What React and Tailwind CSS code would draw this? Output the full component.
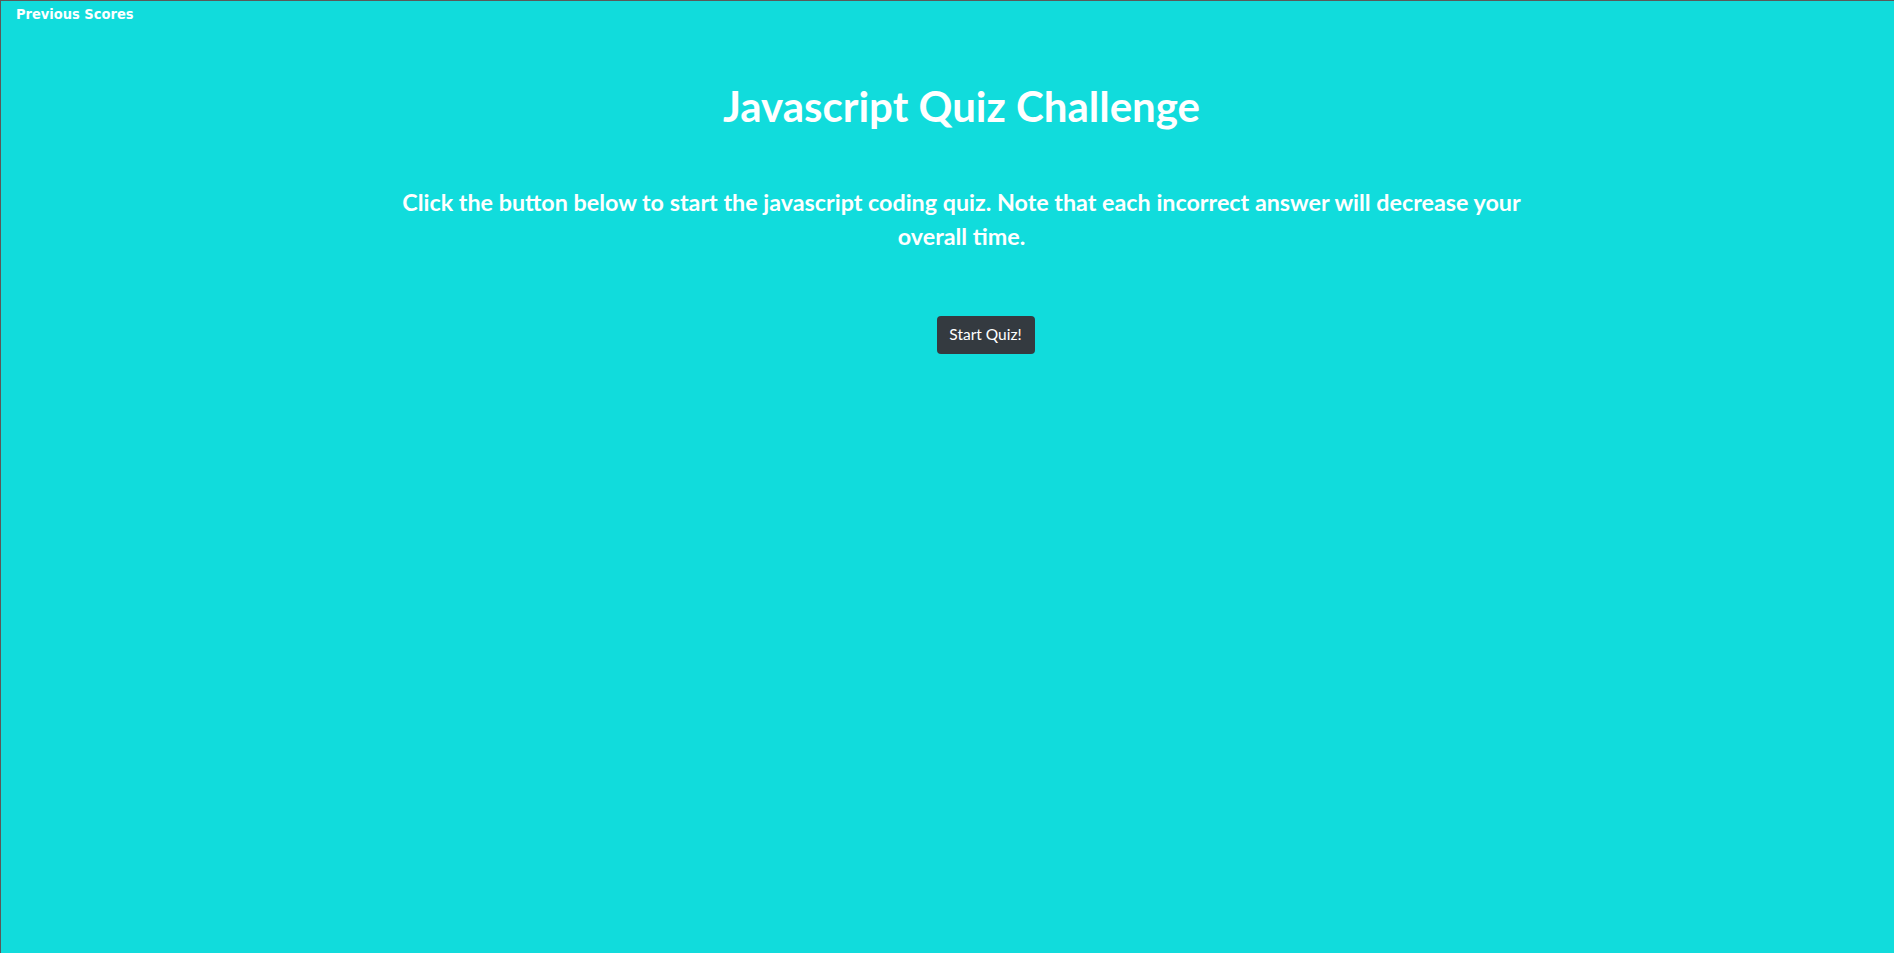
import React from 'react';

export default function App() {
  return (
    <div className="min-h-screen w-full bg-[#11dcdc] border-t border-l border-[#5a5a5a] text-white">
      {/* Top bar */}
      <div className="px-[15px] pt-[4px] leading-[16px]">
        <a className="text-[14.5px] font-bold leading-[16px] font-['DejaVu_Sans_Condensed','DejaVu_Sans',sans-serif] cursor-pointer">
          Previous Scores
        </a>
      </div>

      {/* Intro */}
      <div className="flex flex-col items-center pl-[28px] font-['Lato',sans-serif]">
        <h1 className="mt-[59px] text-[42px] font-bold leading-[50px]">Javascript Quiz Challenge</h1>
        <p className="mt-[54px] w-[1160px] text-center text-[23.3px] font-bold leading-[34px]">
          Click the button below to start the javascript coding quiz. Note that each incorrect answer will decrease your overall time.
        </p>
        <button className="mt-[63px] ml-[48px] h-[38px] w-[98px] rounded-[4px] bg-[#343a40] text-[15.5px] text-white">
          Start Quiz!
        </button>
      </div>
    </div>
  );
}
